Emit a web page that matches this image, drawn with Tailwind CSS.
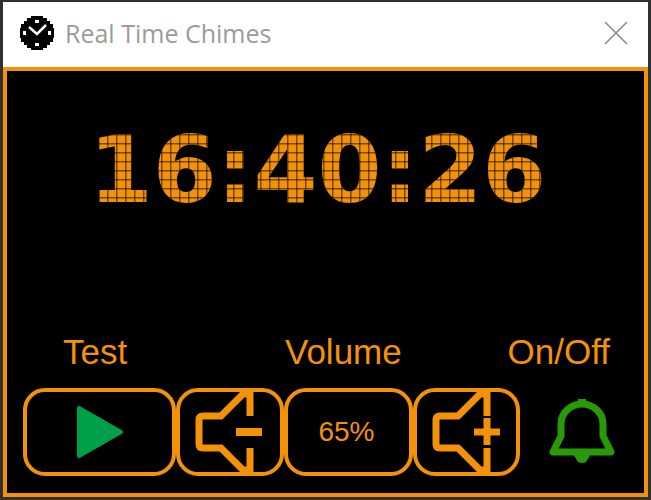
<!DOCTYPE html>
<html lang="en">
  <head>
    <meta charset="UTF-8" />
    <title>Real Time Chimes</title>
    <meta name="viewport" content="width=device-width, initial-scale=1.0" />
    <script src="https://cdn.jsdelivr.net/npm/@tailwindcss/browser@4"></script>
  </head>
  <body class="min-h-screen flex flex-col bg-[#303030] p-[3px] pt-[2px] font-['Liberation_Sans',sans-serif] text-[#f39208]">
    <header class="h-[65px] shrink-0 flex items-center bg-white px-4 pr-5 pb-1">
      <svg class="w-[36px] h-[36px] shrink-0" viewBox="0 0 36 36" fill="none">
        <path d="M12 1h12v2h4v3h3v3h3v4h1v10h-1v4h-3v3h-3v3h-4v2H12v-2H8v-3H5v-3H2v-4H1V13h1V9h3V6h3V3h4z" fill="#000" />
        <path d="M10 12l8 7 9-9" stroke="#fff" stroke-width="2.5" />
        <path d="M16 5h4v3h-4zM16 28h4v3h-4zM4 16h3v4H4zM29 16h3v4h-3z" fill="#fff" />
      </svg>
      <h1 class="ml-[10px] font-['Open_Sans',sans-serif] text-[25px] leading-8 text-[#9b9b9b]">Real Time Chimes</h1>
      <button type="button" aria-label="Close" class="ml-auto">
        <svg class="w-6 h-6" viewBox="0 0 24 24" fill="none" stroke="#8c8c8c" stroke-width="1.6">
          <path d="M1 1l22 22M23 1L1 23" />
        </svg>
      </button>
    </header>

    <main class="grow flex flex-col bg-black border-4 border-[#f39208] pb-[17px]">
      <!-- LED clock: the glyphs are filled with a 9px cell pattern -->
      <time id="clock" class="mt-[54px] mr-4 self-center font-['DejaVu_Sans',sans-serif] font-bold text-[92px] leading-[92px] text-transparent bg-clip-text bg-[linear-gradient(#00000080_1px,transparent_2px),linear-gradient(90deg,#00000080_1px,transparent_2px),linear-gradient(#f39208,#f39208)] bg-[size:9px_9px]">16:40:26</time>

      <div class="mt-auto flex justify-between pl-14 pr-[34px] text-[35px] leading-10">
        <span>Test</span>
        <span class="-mr-[52px]">Volume</span>
        <span>On/Off</span>
      </div>

      <div class="mt-4 pl-4 grid grid-cols-[153fr_108fr_129fr_107fr_124fr] h-[88px]">
        <button type="button" aria-label="Test" class="border-4 border-[#f39208] rounded-[22px] flex items-center justify-center">
          <svg class="w-[48px] h-[54px]" viewBox="0 0 48 54">
            <path d="M3 3v48l42-24z" fill="#00a04a" stroke="#00a04a" stroke-width="4" stroke-linejoin="round" />
          </svg>
        </button>
        <button type="button" aria-label="Volume down" class="border-4 border-[#f39208] rounded-[22px] flex items-center justify-center">
          <svg class="w-[72px] h-[80px] shrink-0" viewBox="0 0 72 80" fill="none" stroke="#f39208">
            <path d="M56 24V2H49L27 24H9q-4 0-4 4v24q0 4 4 4h18l22 22h7V56" stroke-width="7" />
            <path d="M42 40h26" stroke-width="8" />
          </svg>
        </button>
        <output class="border-4 border-[#f39208] rounded-[22px] flex items-center justify-center pr-1 text-[28px] leading-8">65%</output>
        <button type="button" aria-label="Volume up" class="border-4 border-[#f39208] rounded-[22px] flex items-center justify-center">
          <svg class="w-[72px] h-[80px] shrink-0" viewBox="0 0 72 80" fill="none" stroke="#f39208">
            <path d="M56 24V2H49L27 24H9q-4 0-4 4v24q0 4 4 4h18l22 22h7V56" stroke-width="7" />
            <path d="M43 40h26M56 26v27" stroke-width="7" />
          </svg>
        </button>
        <button type="button" aria-label="Chimes on or off" class="flex items-center justify-center">
          <svg class="w-[66px] h-[66px]" viewBox="0 0 66 66">
            <path d="M12 37V25a21 20 0 0 1 42 0v12l8 16H4z" fill="none" stroke="#289a08" stroke-width="7" stroke-linejoin="round" />
            <path d="M24 55h18l-5 8q-4 2-8 0z" fill="#289a08" />
            <path d="M29 0h8v5h-8z" fill="#289a08" />
          </svg>
        </button>
      </div>
    </main>
  </body>
</html>
